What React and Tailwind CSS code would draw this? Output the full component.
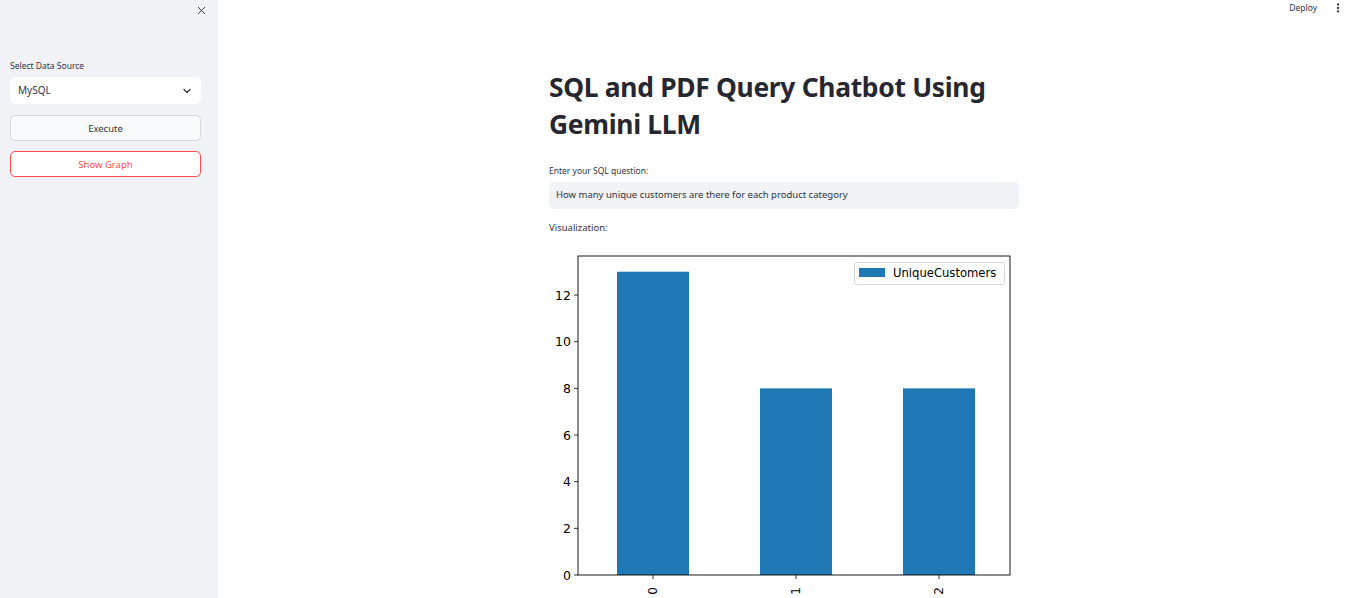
import { X, ChevronDown, EllipsisVertical } from "lucide-react";

const sans = { fontFamily: '"Noto Sans", "Open Sans", sans-serif' };

const bars = [
  { label: "0", value: 13 },
  { label: "1", value: 8 },
  { label: "2", value: 8 },
];

// axes box inside svg
const AX = { left: 29, right: 461, top: 15, bottom: 334 };
const perUnit = 23.33;
const ticks = [0, 2, 4, 6, 8, 10, 12];

const Chart = () => (
  <svg width="470" height="370" className="block" style={{ fontFamily: '"DejaVu Sans", sans-serif' }}>
    <rect x="0" y="0" width="470" height="370" fill="#fff" />
    {bars.map((b, i) => {
      const cx = 104 + i * 143;
      const h = b.value * perUnit;
      return (
        <g key={b.label}>
          <rect x={cx - 36} y={AX.bottom - h} width="72" height={h} fill="#1f77b4" />
          <line x1={cx} x2={cx} y1={AX.bottom} y2={AX.bottom + 4} stroke="#000" strokeWidth="0.8" />
          <text
            x={cx}
            y={AX.bottom + 16}
            fontSize="12"
            fill="#000"
            textAnchor="middle"
            transform={`rotate(-90 ${cx} ${AX.bottom + 16})`}
            dominantBaseline="middle"
          >
            {b.label}
          </text>
        </g>
      );
    })}
    {ticks.map((t) => {
      const y = AX.bottom - t * perUnit;
      return (
        <g key={t}>
          <line x1={AX.left - 4} x2={AX.left} y1={y} y2={y} stroke="#000" strokeWidth="0.8" />
          <text x={AX.left - 7} y={y + 4.5} fontSize="12.5" textAnchor="end" fill="#000">
            {t}
          </text>
        </g>
      );
    })}
    <rect
      x={AX.left}
      y={AX.top}
      width={AX.right - AX.left}
      height={AX.bottom - AX.top}
      fill="none"
      stroke="#000"
      strokeWidth="0.9"
    />
    <rect x="305.5" y="21.5" width="150" height="22" rx="2" fill="#fff" stroke="#d8d8d8" strokeWidth="1" />
    <rect x="310" y="27" width="26" height="9" fill="#1f77b4" />
    <text x="344" y="36" fontSize="11.6" fill="#000">
      UniqueCustomers
    </text>
  </svg>
);

export default function App() {
  return (
    <div className="flex h-[598px] w-full overflow-hidden bg-white text-[#31333f]" style={sans}>
      <aside className="w-[218px] shrink-0 bg-[#f0f2f6] pl-[10px] pr-[17px]">
        <div className="-mr-[7px] flex justify-end pt-[4px]">
          <X size={13} strokeWidth={1.8} className="text-[#31333f]" />
        </div>
        <div className="mt-[43px] text-[8.5px] leading-[12px]">Select Data Source</div>
        <div className="mt-[5px] flex h-[27px] items-center justify-between rounded-[5px] bg-white pl-[8px] pr-[8px] text-[10px]">
          <span>MySQL</span>
          <ChevronDown size={12} strokeWidth={2.4} />
        </div>
        <button className="mt-[11px] flex h-[26px] w-full items-center justify-center rounded-[5px] border border-[#d5d6da] bg-[#f9fafb] pt-[2px] text-[9.5px] text-[#31333f]">
          Execute
        </button>
        <button className="mt-[10px] flex h-[26px] w-full items-center justify-center rounded-[5px] border border-[#ff4b4b] bg-white pt-[2px] text-[9.5px] text-[#ff4b4b]">
          Show Graph
        </button>
      </aside>
      <main className="relative flex-1">
        <div className="absolute right-[6px] top-[2px] flex items-center gap-[15px] text-[8.5px]">
          <span>Deploy</span>
          <EllipsisVertical size={12} strokeWidth={2.6} />
        </div>
        <div className="mx-auto w-[470px] pt-[69px]">
          <h1 className="text-[26.4px] font-bold leading-[37px] tracking-[-0.3px] text-[#262730]">
            SQL and PDF Query Chatbot Using Gemini LLM
          </h1>
          <div className="mt-[22px] text-[8.5px] leading-[12px]">Enter your SQL question:</div>
          <div className="mt-[5px] flex h-[27px] items-center rounded-[5px] bg-[#f0f2f6] px-[7px] text-[9.5px]">
            How many unique customers are there for each product category
          </div>
          <div className="mt-[12px] text-[9.5px] leading-[14px]">Visualization:</div>
          <div className="mt-[6px]">
            <Chart />
          </div>
        </div>
      </main>
    </div>
  );
}
